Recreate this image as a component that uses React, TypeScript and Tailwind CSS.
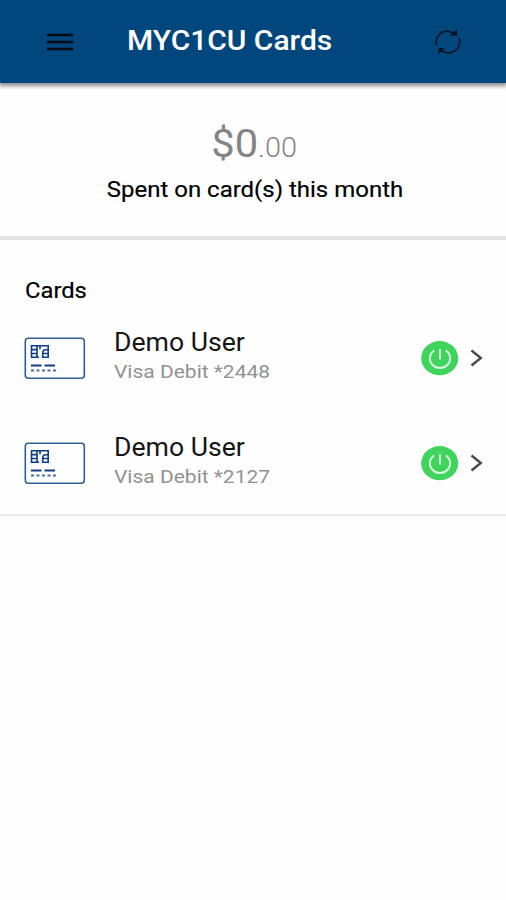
const cards = [
  { id: 1, name: "Demo User", detail: "Visa Debit *2448" },
  { id: 2, name: "Demo User", detail: "Visa Debit *2127" },
];

function MenuIcon() {
  return (
    <svg width="28" height="20" viewBox="0 0 28 20" stroke="#060c16" strokeWidth="2.4">
      <path d="M1 3h26M1 10h26M1 17h26" />
    </svg>
  );
}

function RefreshIcon() {
  return (
    <svg width="28" height="28" viewBox="0 0 28 28" fill="none" stroke="#06121f" strokeWidth="1.6">
      <path d="M2.600 17.500C.8 10 5.500 3.500 12.500 3.200c3-.1 5.600.9 7.800 2.700" />
      <path d="M25.200 10c2 7.400-2.600 14.600-10.700 14.800-3.300.1-5.700-.9-7.900-2.700" />
      <path d="M23 1.500v6h-7zM4.500 26.500v-6.500h6z" fill="#06121f" stroke="none" />
    </svg>
  );
}

function CardIcon() {
  return (
    <svg width="62" height="43" viewBox="0 0 62 43" fill="none">
      <rect x="1.300" y="1.300" width="59" height="40" rx="3" stroke="#2f5f93" strokeWidth="1.600" />
      {/* chip */}
      <path
        d="M15 20.300H7.500V8.800h16.700v11.500h-5.500v-4.500q0-3 3-3h2.500M7.500 12.600h5.500M7.500 16.500h5.500M13 8.800v11.500M19 16.500h5"
        stroke="#123f82"
        strokeWidth="1.600"
      />
      <path d="M16 8.800v3.500" stroke="#123f82" strokeWidth="1.600" />
      <path d="M7 28.500h10.500M20.500 28.500h10.500" stroke="#123f82" strokeWidth="2" />
      <path d="M7 33.500h25" stroke="#4a6c9f" strokeWidth="1.800" strokeDasharray="3 2.500" />
    </svg>
  );
}

function PowerIcon() {
  return (
    <svg width="38" height="35" viewBox="0 0 38 35" fill="none">
      <ellipse cx="18.700" cy="17.200" rx="18.500" ry="17.100" fill="#3fd45c" />
      <path d="M13.200 9.500A10.200 9.600 0 1 0 24.800 9.500M19 8v10.500" stroke="#dcf8e1" strokeWidth="1.900" />
    </svg>
  );
}

function ChevronIcon() {
  return (
    <svg width="14" height="18" viewBox="0 0 14 18" fill="none" stroke="#4a4a4a" strokeWidth="2.400">
      <path d="M1.500 1.500L10.800 9 1.500 16.500" />
    </svg>
  );
}

export default function App() {
  return (
    <div className="min-h-[900px] w-full bg-[#fefefe] font-['Roboto',sans-serif]">
      <header className="relative flex h-[83px] items-center bg-[#01477d] pl-[46px] pr-[44px] shadow-[0_2px_4px_1px_rgba(0,0,0,0.45)]">
        <button className="mt-px">
          <MenuIcon />
        </button>
        <h1 className="mb-[2px] ml-[52.5px] origin-left scale-x-[1.07] whitespace-nowrap text-[28px] font-medium leading-[80px] text-white">
          MYC1CU Cards
        </h1>
        <button className="ml-auto">
          <RefreshIcon />
        </button>
      </header>

      {/* Monthly total */}
      <section className="flex h-[157px] flex-col items-center border-b-4 border-[#e3e3e3] pl-[3px] pt-[37px]">
        <p className="scale-x-[1.07] text-[39px] font-normal leading-[48px] text-[#858585]">
          $0<span className="text-[27px] font-light">.00</span>
        </p>
        <p className="scale-x-[1.09] text-[22px] leading-[36px] text-black [-webkit-text-stroke:0.2px_black]">
          Spent on card(s) this month
        </p>
      </section>

      <section className="h-[276px] border-b-2 border-[#ebebeb] pt-[35px]">
        <h2 className="ml-[25px] w-fit origin-left scale-x-[1.08] text-[22px] leading-[32px] text-black [-webkit-text-stroke:0.2px_black]">
          Cards
        </h2>
        {cards.map((card) => (
          <div key={card.id} className="flex h-[105px] items-center pb-[3px] pl-[24px] pr-[22px]">
            <CardIcon />
            <div className="mb-[2px] ml-[28px] flex-1">
              <p className="w-fit origin-left scale-x-[1.065] text-[25px] leading-[30px] text-[#161616]">{card.name}</p>
              <p className="w-fit origin-left scale-x-[1.105] text-[19px] leading-[28px] text-[#929292]">{card.detail}</p>
            </div>
            <PowerIcon />
            <span className="ml-[11px]">
              <ChevronIcon />
            </span>
          </div>
        ))}
      </section>
    </div>
  );
}
